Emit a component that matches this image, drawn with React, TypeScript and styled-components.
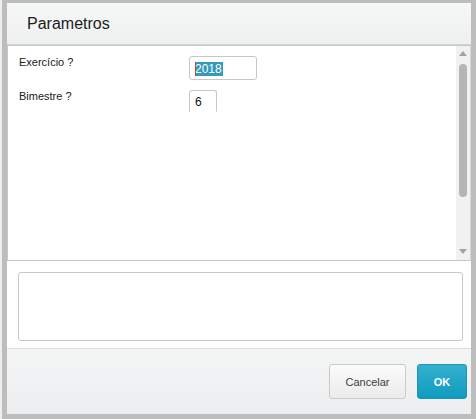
import React from "react";
import styled, { createGlobalStyle } from "styled-components";

const Global = createGlobalStyle`
  html, body { margin: 0; padding: 0; }
  body { font-family: "Liberation Sans", Arial, sans-serif; background: #bdbdbd; }
  * { box-sizing: border-box; }
`;

const Page = styled.div`
  width: 476px;
  height: 419px;
  background: #bdbdbd;
  border-left: 2px solid #eeeeee;
  padding: 3px 5px 5px 5px;
  display: flex;
`;

const Dialog = styled.div`
  flex: 1;
  display: flex;
  flex-direction: column;
  background: #ffffff;
`;

const Header = styled.div`
  height: 42px;
  flex: none;
  display: flex;
  align-items: center;
  padding-left: 20px;
  padding-top: 1px;
  background: linear-gradient(#f6f7f7, #eef0f0);
  border-bottom: 1px solid #d4d4d4;
`;

const Title = styled.h1`
  margin: 0;
  font-size: 16px;
  font-weight: normal;
  color: #1c1c1c;
`;

const Panel = styled.div`
  height: 216px;
  flex: none;
  display: flex;
  border: 1px solid #c6c6c6;
  border-right-color: #d8d8d8;
`;

const Form = styled.div`
  flex: 1;
  padding: 10px 0 0 11px;
  display: grid;
  grid-template-columns: 170px auto;
  grid-auto-rows: min-content;
  row-gap: 10px;
  align-content: start;
`;

const Label = styled.div`
  font-size: 11px;
  color: #202020;
  line-height: 13px;
`;

const Field = styled.div<{ $w: number; $open?: boolean }>`
  width: ${(p) => p.$w}px;
  height: ${(p) => (p.$open ? 22 : 24)}px;
  border: 1px solid #c8c8c8;
  border-bottom-color: ${(p) => (p.$open ? "transparent" : "#c8c8c8")};
  border-radius: ${(p) => (p.$open ? "3px 3px 0 0" : "3px")};
  padding: ${(p) => (p.$open ? "4px" : "5px")} 0 0 5px;
  font-size: 12px;
  color: #111;
  line-height: 14px;
  display: flex;
  align-items: flex-start;
`;

const Selected = styled.span`
  position: relative;
  background: #3399bd;
  color: #ffffff;
  padding: 0 1px 0 0;
  &::before {
    content: "";
    position: absolute;
    left: 0;
    top: 0;
    bottom: 0;
    width: 1px;
    background: #c0502a;
  }
`;

const Scrollbar = styled.div`
  width: 14px;
  flex: none;
  background: #f1f1f1;
  display: flex;
  flex-direction: column;
  align-items: center;
  padding: 4px 0 5px;
`;

const Arrow = styled.div<{ $down?: boolean }>`
  width: 0;
  height: 0;
  border-left: 4px solid transparent;
  border-right: 4px solid transparent;
  ${(p) =>
    p.$down
      ? "border-top: 5px solid #a3a3a3;"
      : "border-bottom: 5px solid #a3a3a3;"}
  margin: 1px 0;
`;

const Track = styled.div`
  flex: 1;
  width: 100%;
  display: flex;
  justify-content: center;
  padding-top: 7px;
`;

const Thumb = styled.div`
  width: 8px;
  height: 133px;
  border-radius: 4px;
  background: #b5b5b5;
`;

const Middle = styled.div`
  flex: none;
  padding: 11px 8px 7px 11px;
  border-bottom: 1px solid #dcdcdc;
`;

const MessageBox = styled.div`
  height: 69px;
  border: 1px solid #c8c8c8;
  border-radius: 3px;
  background: #ffffff;
`;

const Footer = styled.div`
  flex: 1;
  display: flex;
  justify-content: flex-end;
  align-items: flex-start;
  gap: 11px;
  padding: 15px 4px 0 0;
  background: linear-gradient(#f4f5f5, #eceef0);
`;

const Button = styled.button<{ $primary?: boolean }>`
  height: 35px;
  border-radius: 3px;
  font-family: "Liberation Sans", Arial, sans-serif;
  font-size: 11px;
  cursor: pointer;
  padding: 0;
  ${(p) =>
    p.$primary
      ? `
    width: 50px;
    background: linear-gradient(#36b0ce, #0f9bc0);
    border: 1px solid #1696b8;
    color: #ffffff;
    font-weight: bold;
  `
      : `
    width: 77px;
    background: linear-gradient(#fbfbfb, #ebebeb);
    border: 1px solid #cacaca;
    color: #3c3c3c;
  `}
`;

export default function App() {
  return (
    <>
      <Global />
      <Page>
        <Dialog>
          <Header>
            <Title>Parametros</Title>
          </Header>
          <Panel>
            <Form>
              <Label>Exercício ?</Label>
              <Field $w={68}>
                <Selected>2018</Selected>
              </Field>
              <Label>Bimestre ?</Label>
              <Field $w={28} $open>
                6
              </Field>
            </Form>
            <Scrollbar>
              <Arrow />
              <Track>
                <Thumb />
              </Track>
              <Arrow $down />
            </Scrollbar>
          </Panel>
          <Middle>
            <MessageBox />
          </Middle>
          <Footer>
            <Button>Cancelar</Button>
            <Button $primary>OK</Button>
          </Footer>
        </Dialog>
      </Page>
    </>
  );
}
